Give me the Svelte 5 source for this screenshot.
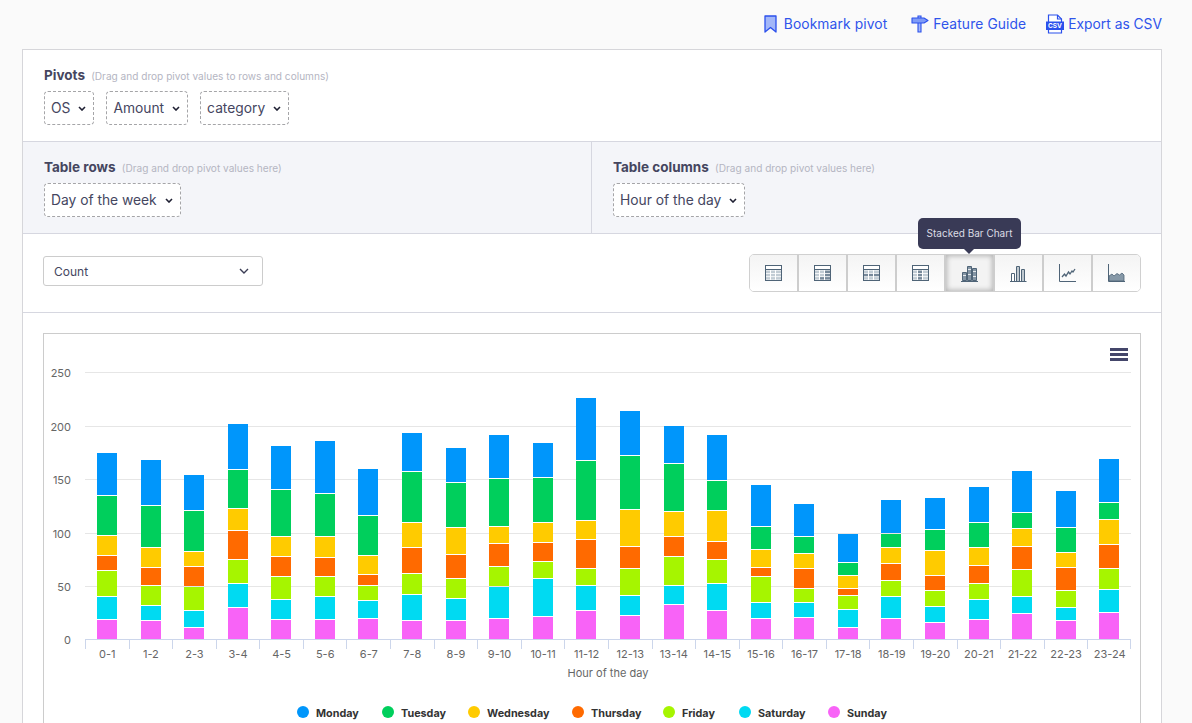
<script>
  const colors = ['#0096fb', '#00cf5c', '#ffcb00', '#ff6a00', '#a6f500', '#00daf2', '#f863f7'];
  const series = ['Monday', 'Tuesday', 'Wednesday', 'Thursday', 'Friday', 'Saturday', 'Sunday'];
  const legendX = [303, 388, 474, 578, 669, 745, 834];
  const tops = [
    [189,317,437,497,542,620,689],[210,347,473,533,587,647,692],[255,362,485,530,590,662,713],
    [102,239,356,422,509,581,653],[168,299,440,500,560,629,689],[153,311,440,503,560,620,689],
    [237,377,497,554,587,632,686],[129,245,398,473,551,614,692],[174,278,413,494,566,626,692],
    [135,266,410,461,530,590,686],[159,263,398,458,515,566,680],[24,212,392,449,536,587,662],
    [63,197,359,470,536,617,677],[108,221,365,440,500,587,644],[135,272,362,455,509,581,662],
    [285,410,479,533,560,638,686],[342,440,491,536,596,638,683],[432,518,557,596,617,659,713],
    [330,431,473,521,572,620,686],[324,419,482,557,602,650,698],[291,398,473,527,581,629,689],
    [243,368,416,470,539,620,671],[303,413,488,533,602,653,692],[207,338,389,464,536,599,668]
  ];
  const pitch = 43.58;
  const bars = tops.map((col, i) => {
    const ys = col.map((v) => Math.round(390 + v / 3));
    return {
      label: `${i}-${i + 1}`,
      x: Math.round(97 + i * pitch),
      center: 85.5 + (i + 0.5) * pitch,
      tick: Math.round(85 + i * pitch) + 0.5,
      segs: ys.map((y, j) => ({ y, h: (j < 6 ? ys[j + 1] - 1 : 639) - y, c: colors[j] }))
    };
  });
  const grid = [[250, 372.5], [200, 426.5], [150, 479.5], [100, 533.5], [50, 586.5], [0, 639.5]];
  const chipsTop = ['OS', 'Amount', 'category'];

  const tableVariants = [
    [],
    [[2, 0], [2, 1], [1, 2], [2, 2]],
    [[0, 1], [1, 1], [2, 1]],
    [[1, 0], [1, 1], [1, 2]]
  ];
  const cellsFor = (dark) => {
    const out = [];
    for (let r = 0; r < 3; r++)
      for (let c = 0; c < 3; c++)
        out.push({
          x: 1 + c * 5,
          y: 5.5 + r * 3.3,
          w: c === 2 ? 5 : 4,
          dark: dark.some(([a, b]) => a === c && b === r)
        });
    return out;
  };
</script>

{#snippet chevron()}
  <svg class="chev" viewBox="0 0 8 5" width="8" height="5"><path d="M1 1l3 3 3-3" fill="none" stroke="#1f2033" stroke-width="1.6" /></svg>
{/snippet}

<div class="page">
  <nav class="links">
    <a class="link wide">
      <svg width="13" height="18" viewBox="0 0 13 18"><path d="M1 1h11v16l-5.500-4.500L1 17z" fill="#a3b7f8" stroke="#2b50ec" stroke-width="1.300" stroke-linejoin="round" /></svg>
      Bookmark pivot
    </a>
    <a class="link guide wide">
      <svg width="18" height="18" viewBox="0 0 18 18"><path d="M7 1h3v16H7z" fill="#a3b7f8" stroke="#2b50ec" stroke-width="1.100" /><path d="M1 3h12l4 2.500L13 8H1z" fill="#7f9bf6" stroke="#2b50ec" stroke-width="1.100" stroke-linejoin="round" /></svg>
      Feature Guide
    </a>
    <a class="link csv">
      <svg width="18" height="20" viewBox="0 0 18 20"><path d="M2.500 1h9l4 4v14h-13z" fill="#fff" stroke="#2b50ec" stroke-width="1.200" /><path d="M11.500 1v4h4" fill="none" stroke="#2b50ec" stroke-width="1.200" /><rect x="0" y="7.500" width="18" height="8.500" fill="#2b50ec" /><text x="9" y="14.200" text-anchor="middle" class="csvt">CSV</text></svg>
      Export as CSV
    </a>
  </nav>

  <main class="panel">
    <section class="pivots">
      <h3>Pivots <small>(Drag and drop pivot values to rows and columns)</small></h3>
      <div class="chips">
        {#each chipsTop as c}
          <span class="chip">{c}{@render chevron()}</span>
        {/each}
      </div>
    </section>

    <section class="dims">
      <div class="dim">
        <h3>Table rows <small>(Drag and drop pivot values here)</small></h3>
        <div class="chips"><span class="chip">Day of the week{@render chevron()}</span></div>
      </div>
      <div class="dim second">
        <h3>Table columns <small>(Drag and drop pivot values here)</small></h3>
        <div class="chips"><span class="chip">Hour of the day{@render chevron()}</span></div>
      </div>
    </section>

    <section class="controls">
      <div class="select">
        <span>Count</span>
        <svg viewBox="0 0 10 6" width="10" height="6"><path d="M1 1l4 4 4-4" fill="none" stroke="#3b3d55" stroke-width="1.400" /></svg>
      </div>
      <div class="group">
        {#each tableVariants as dark}
          <button class="btn" aria-label="Table view">
            <svg width="17" height="16" viewBox="0 0 17 16">
              <rect x="0.500" y="0.500" width="16" height="15" fill="#fff" stroke="#4f6477" />
              <rect x="1" y="4" width="15" height="1" fill="#4f6477" />
              {#each cellsFor(dark) as cell}
                <rect x={cell.x} y={cell.y} width={cell.w} height="2.500" fill={cell.dark ? '#77899a' : '#c2ccd4'} />
              {/each}
            </svg>
          </button>
        {/each}
        <button class="btn active" aria-label="Stacked Bar Chart">
          <svg width="17" height="18" viewBox="0 0 17 18">
            <path d="M1.500 8.500h4v8h-4zM6.500 2.500h4v14h-4zM11.500 4.500h4v12h-4z" fill="#8495a4" stroke="#4f6477" />
            <path d="M2 11.500h3M7 5.500h3M7 10.500h3M12 7.500h3M12 12.500h3" stroke="#e4e8ec" />
            <path d="M0 17.500h17" stroke="#4f6477" />
          </svg>
        </button>
        <button class="btn" aria-label="Bar Chart">
          <svg width="17" height="18" viewBox="0 0 17 18">
            <path d="M1.500 9.500h3v8h-3zM6.500 2.500h3v15h-3zM11.500 5.500h3v12h-3z" fill="#fff" stroke="#4f6477" />
            <path d="M8 3v14M13 6v11" stroke="#aab6c0" stroke-width="1.500" />
            <path d="M0 17.500h16.500" stroke="#4f6477" />
          </svg>
        </button>
        <button class="btn" aria-label="Line Chart">
          <svg width="17" height="18" viewBox="0 0 17 18">
            <path d="M0.500 0v17.500h16.500" fill="none" stroke="#4f6477" />
            <path d="M3 13l2.500-3 1.500 2 2.500-4 1.500 2 2-3 1 1 2-3" fill="none" stroke="#4f6477" stroke-width="1.300" />
          </svg>
        </button>
        <button class="btn" aria-label="Area Chart">
          <svg width="17" height="18" viewBox="0 0 17 18">
            <path d="M1 12l3-2 2 2 3-2.500 2.500 1.500 2.500-2 2 2v6H1z" fill="#8799a8" stroke="#4f6477" stroke-width="0.800" />
            <path d="M0.500 0v17.500h16.500" fill="none" stroke="#4f6477" />
          </svg>
        </button>
        <div class="tip">Stacked Bar Chart</div>
      </div>
    </section>

    <section class="chartwrap">
      <div class="chart">
        <svg class="plot" width="1096" height="420" viewBox="44 334 1096 420">
          {#each grid as [v, y]}
            {#if v > 0}<line x1="85" x2="1131" y1={y} y2={y} stroke="#e6e6e6" />{/if}
            <text x="71" y={y + 4.500} text-anchor="end" class="lab">{v}</text>
          {/each}
          {#each bars as b}
            {#each b.segs as s}
              <rect x={b.x} y={s.y} width="20" height={s.h} fill={s.c} />
            {/each}
            <line x1={b.tick} x2={b.tick} y1="640" y2="649" stroke="#ccd6eb" />
            <text x={b.center} y="658" text-anchor="middle" class="lab">{b.label}</text>
          {/each}
          <line x1="1130.500" x2="1130.500" y1="640" y2="649" stroke="#ccd6eb" />
          <line x1="85" x2="1131" y1="639.500" y2="639.500" stroke="#ccd6eb" />
          <text x="608" y="677" text-anchor="middle" class="lab">Hour of the day</text>
          {#each series as name, i}
            <circle cx={legendX[i]} cy="712" r="6" fill={colors[i]} />
            <text x={legendX[i] + 13} y="717" class="leg">{name}</text>
          {/each}
          <path d="M1110 349.500h18M1110 354.500h18M1110 359.500h18" stroke="#44466a" stroke-width="3" />
        </svg>
      </div>
    </section>
  </main>
</div>

<style>
  :global(body) {
    margin: 0;
    background: #fafafa;
    overflow: hidden;
    font-family: Inter, "Liberation Sans", sans-serif;
    color: #45465f;
  }
  .page {
    width: 1192px;
    height: 723px;
    overflow: hidden;
  }
  .links {
    display: flex;
    justify-content: flex-end;
    align-items: center;
    gap: 24px;
    height: 49px;
    padding: 0 30px 2px 0;
    box-sizing: border-box;
  }
  .link {
    display: flex;
    align-items: center;
    gap: 7px;
    font-size: 13.800px;
    color: #2f54eb;
  }
  .wide {
    letter-spacing: 0.120px;
  }
  .link svg {
    display: block;
  }
  .guide {
    gap: 4px;
  }
  .csv {
    margin-left: -4px;
    gap: 4px;
  }
  .csvt {
    font: 700 6.500px Inter, sans-serif;
    fill: #fff;
  }
  .panel {
    margin-left: 22px;
    width: 1140px;
    box-sizing: border-box;
    border: 1px solid #d6d6da;
    background: #fff;
  }
  h3 {
    margin: 0;
    font-size: 13.500px;
    line-height: 16px;
    font-weight: 700;
    color: #45465f;
  }
  small {
    margin-left: 3px;
    font-size: 10.100px;
    font-weight: 400;
    color: #b4b5c2;
  }
  .pivots {
    height: 92px;
    box-sizing: border-box;
    padding: 17px 21px 0;
    border-bottom: 1px solid #d6d7e0;
  }
  .chips {
    display: flex;
    gap: 12px;
    margin-top: 7px;
  }
  .chip {
    display: flex;
    align-items: center;
    gap: 8px;
    height: 34px;
    box-sizing: border-box;
    padding: 0 7px 0 6px;
    border: 1px dashed #a5a5a8;
    border-radius: 4px;
    font-size: 13.800px;
    background: #fff;
    color: #45465f;
  }
  .chev {
    display: block;
    margin-top: 1px;
  }
  .dims {
    display: flex;
    height: 92px;
    box-sizing: border-box;
    background: #f4f5f9;
    border-bottom: 1px solid #d6d7e0;
  }
  .dim {
    box-sizing: border-box;
    padding: 17px 21px 0;
    width: 568px;
  }
  .dim.second {
    flex: 1;
    border-left: 1px solid #d6d7e0;
  }
  .controls {
    display: flex;
    justify-content: space-between;
    align-items: center;
    height: 79px;
    box-sizing: border-box;
    padding: 0 20px;
    border-bottom: 1px solid #d6d7e0;
  }
  .select {
    display: flex;
    justify-content: space-between;
    align-items: center;
    width: 220px;
    height: 30px;
    box-sizing: border-box;
    margin-bottom: 4px;
    padding: 0 13px 0 10px;
    border: 1px solid #ccc;
    border-radius: 3px;
    font-size: 12px;
    color: #45465f;
  }
  .group {
    position: relative;
    display: flex;
    width: 392px;
    height: 38px;
    box-sizing: border-box;
    border: 1px solid #d0d0d0;
    border-radius: 5px;
    overflow: visible;
  }
  .btn {
    flex: 0 0 49px;
    box-sizing: border-box;
    display: flex;
    justify-content: center;
    align-items: center;
    padding: 0;
    border: 0;
    border-right: 2px solid #cdcdcd;
    background: linear-gradient(#f4f4f4, #fff);
  }
  .btn:first-child {
    border-radius: 4px 0 0 4px;
  }
  .btn:nth-last-child(2) {
    flex-basis: 47px;
    border-right: 0;
    border-radius: 0 4px 4px 0;
  }
  .btn.active {
    background: #f3f3f3;
    box-shadow: inset 0 0 5px 1px #b5b5b5;
  }
  .tip {
    position: absolute;
    left: 168px;
    top: -37px;
    width: 103px;
    height: 31px;
    box-sizing: border-box;
    padding-bottom: 1px;
    display: flex;
    justify-content: center;
    align-items: center;
    border-radius: 5px;
    background: #393a56;
    color: #dcdce4;
    font-size: 10px;
  }
  .tip::after {
    content: "";
    position: absolute;
    left: 46px;
    bottom: -5px;
    border: 5px solid transparent;
    border-bottom: 0;
    border-top-color: #393a56;
  }
  .chartwrap {
    padding: 20px 20px 0;
  }
  .chart {
    width: 1098px;
    box-sizing: border-box;
    border: 1px solid #ccc;
    background: #fff;
  }
  .plot {
    display: block;
  }
  .lab {
    font: 400 11px Inter, sans-serif;
    fill: #666;
  }
  .leg {
    font: 700 10.800px Inter, sans-serif;
    fill: #333;
  }
</style>
